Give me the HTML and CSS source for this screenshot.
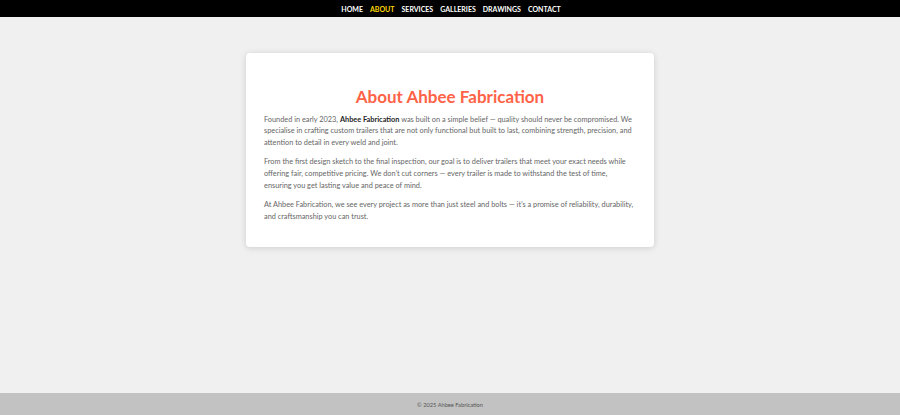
FILE: index.html
```html
<!DOCTYPE html>
<html lang="en">
<head>
<meta charset="utf-8">
<title>About - Ahbee Fabrication</title>
<link rel="stylesheet" href="styles.css">
</head>
<body>
<nav class="topnav">
  <a href="#" class="nav-link">HOME</a>
  <a href="#" class="nav-link active">ABOUT</a>
  <a href="#" class="nav-link">SERVICES</a>
  <a href="#" class="nav-link">GALLERIES</a>
  <a href="#" class="nav-link">DRAWINGS</a>
  <a href="#" class="nav-link">CONTACT</a>
</nav>
<main class="main">
  <section class="card">
    <h1 class="title">About Ahbee Fabrication</h1>
    <p class="text">Founded in early 2023, <strong>Ahbee Fabrication</strong> was built on a simple belief — quality should never be compromised. We specialise in crafting custom trailers that are not only functional but built to last, combining strength, precision, and attention to detail in every weld and joint.</p>
    <p class="text">From the first design sketch to the final inspection, our goal is to deliver trailers that meet your exact needs while offering fair, competitive pricing. We don’t cut corners — every trailer is made to withstand the test of time, ensuring you get lasting value and peace of mind.</p>
    <p class="text">At Ahbee Fabrication, we see every project as more than just steel and bolts — it’s a promise of reliability, durability, and craftsmanship you can trust.</p>
  </section>
</main>
<footer class="footer">© 2025 Ahbee Fabrication</footer>
</body>
</html>
```
FILE: styles.css
```css
* { box-sizing: border-box; }
html, body { height: 100%; }
body {
  margin: 0;
  display: flex;
  flex-direction: column;
  background: #f0f0f0;
  font-family: Lato, "Open Sans", sans-serif;
  color: #555;
}
.topnav {
  height: 17px;
  background: #000;
  display: flex;
  justify-content: center;
  align-items: center;
  gap: 7px;
  padding-left: 2px;
}
.nav-link {
  color: #fff;
  text-decoration: none;
  font-weight: 700;
  font-size: 7px;
}
.nav-link.active { color: #ffd700; }
.main {
  flex: 1;
  padding-top: 36px;
}
.card {
  width: 408px;
  margin: 0 auto;
  background: #fff;
  border-radius: 4px;
  box-shadow: 0 1px 6px rgba(0,0,0,0.15);
  padding: 33.5px 18px 17px;
}
.title {
  margin: 0 0 7px;
  text-align: center;
  color: #ff6347;
  font-size: 17px;
  font-weight: 700;
  line-height: 20px;
}
.text {
  margin: 0 0 7.5px;
  font-size: 7.35px;
  line-height: 11.8px;
  color: #666;
}
.text strong { color: #222; }
.footer {
  height: 22px;
  background: #c2c2c2;
  color: #555;
  font-size: 5.7px;
  display: flex;
  align-items: center;
  justify-content: center;
}
```
